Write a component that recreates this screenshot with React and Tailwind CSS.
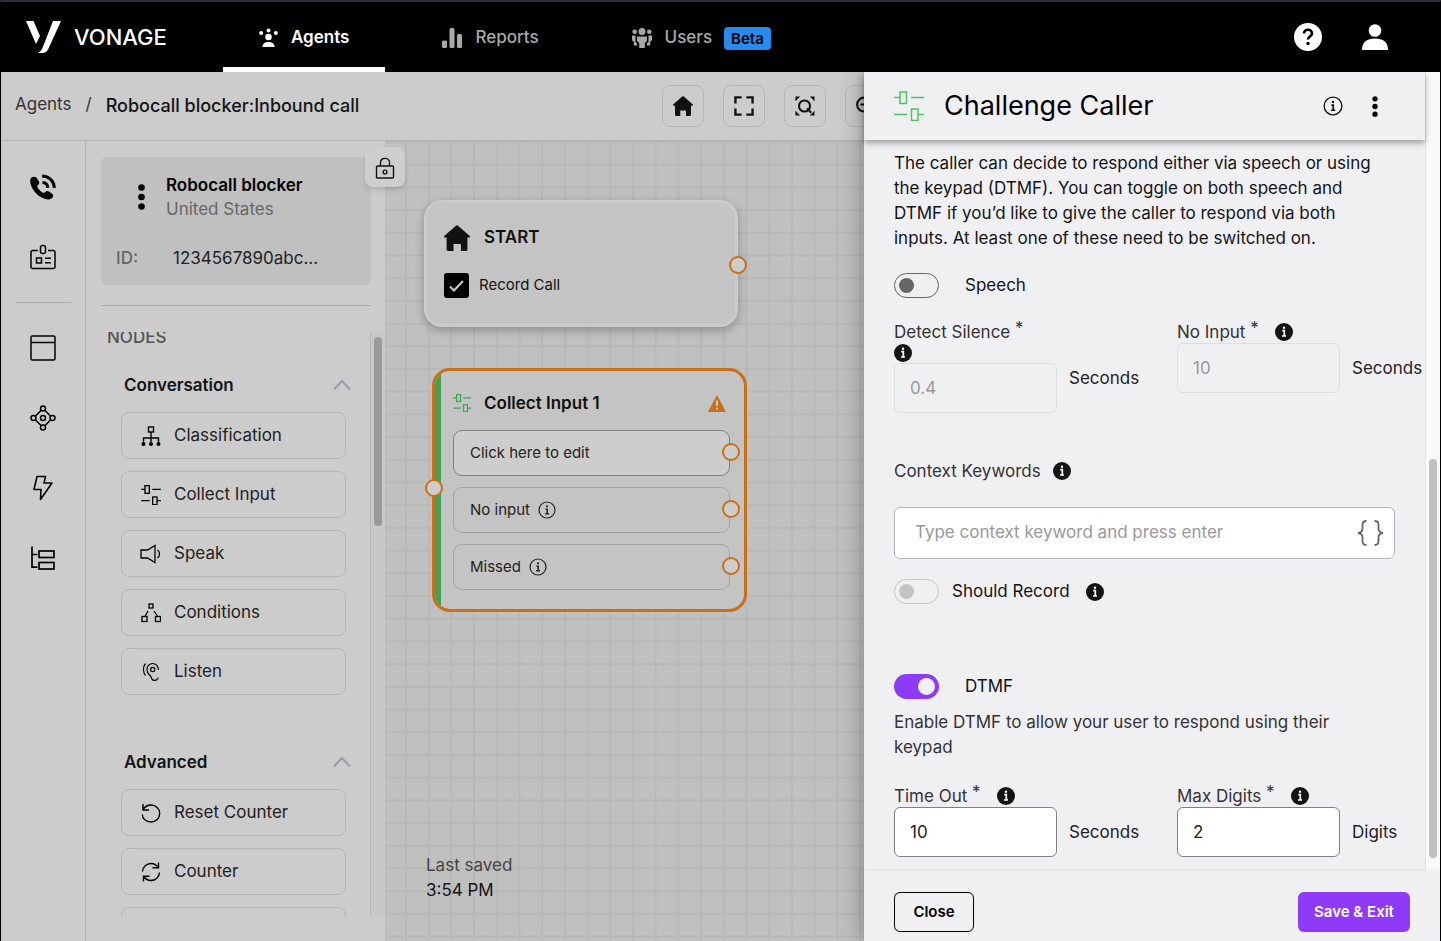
import { useState } from 'react';

function SlidersIcon({ size = 30, stroke = 1.5 }) {
  return (
    <svg width={size} height={size} viewBox="0 0 30 30" fill="none" stroke="currentColor" strokeWidth={stroke} aria-hidden="true">
      <path d="M0 6.5H6M17 6.5H30M0 23.5H13M24 23.5H30" />
      <rect x="6" y="1" width="6.5" height="11.5" />
      <rect x="17.5" y="18" width="6.5" height="11.5" />
    </svg>
  );
}

function HomeIcon({ size }) {
  return (
    <svg width={size} height={size} viewBox="0 0 20 20" fill="currentColor" aria-hidden="true">
      <path d="M9.2 .5a1.2 1.2 0 0 1 1.6 0L19.6 8.2c.7.6.4 1.5-.4 1.5H18V18.8c0 .7-.4 1.2-1.1 1.2H13V14.6H7.3V20H3.2C2.5 20 2 19.5 2 18.8V9.7H.8c-.8 0-1.1-.9-.4-1.5Z" />
    </svg>
  );
}

function InfoSolid() {
  return (
    <svg width="18" height="18" viewBox="0 0 18 18" className="shrink-0" aria-label="More information">
      <circle cx="9" cy="9" r="9" fill="#131415" />
      <circle cx="9" cy="4.7" r="1.2" fill="#fff" />
      <path d="M7.2 7.7H9.3V13M7 13H11" stroke="#fff" strokeWidth="1.7" fill="none" />
    </svg>
  );
}

function InfoOutline({ size = 18 }) {
  return (
    <svg width={size} height={size} viewBox="0 0 18 18" className="shrink-0" aria-hidden="true">
      <circle cx="9" cy="9" r="8" fill="none" stroke="currentColor" strokeWidth="1.2" />
      <circle cx="9" cy="5.3" r="1.1" fill="currentColor" />
      <path d="M7.5 8.2H9.2V12.8M7.2 12.8H11" stroke="currentColor" strokeWidth="1.5" fill="none" />
    </svg>
  );
}

function DotsIcon({ width, height }) {
  return (
    <svg width={width} height={height} viewBox="0 0 7 26" fill="currentColor" aria-hidden="true">
      <circle cx="3.5" cy="3.5" r="3.3" />
      <circle cx="3.5" cy="13" r="3.3" />
      <circle cx="3.5" cy="22.5" r="3.3" />
    </svg>
  );
}

function ChevronUp() {
  return (
    <svg width="18" height="12" viewBox="0 0 18 12" fill="none" stroke="#9a9aa2" strokeWidth="2" aria-hidden="true">
      <path d="M1 10.5 9 2l8 8.5" />
    </svg>
  );
}

const navTabs = [
  {
    label: 'Agents',
    active: true,
    icon: (
      <svg width="19" height="20" viewBox="0 0 19 20" fill="currentColor" aria-hidden="true">
        <circle cx="2.2" cy="5" r="2" />
        <circle cx="9.5" cy="2.5" r="2" />
        <circle cx="16.8" cy="5" r="2" />
        <circle cx="9.5" cy="9" r="3.3" />
        <path d="M3.5 19c0-3.5 2.3-5 6-5s6 1.5 6 5Z" />
      </svg>
    ),
  },
  {
    label: 'Reports',
    icon: (
      <svg width="20" height="20" viewBox="0 0 20 20" fill="currentColor" aria-hidden="true">
        <rect x="0" y="12.5" width="5" height="7.5" rx="1.5" />
        <rect x="7.5" y="0" width="5" height="20" rx="1.5" />
        <rect x="15" y="6" width="5" height="14" rx="1.5" />
      </svg>
    ),
  },
  {
    label: 'Users',
    badge: 'Beta',
    icon: (
      <svg width="20" height="20" viewBox="0 0 20 20" fill="currentColor" aria-hidden="true">
        <circle cx="10" cy="3.5" r="3.5" />
        <circle cx="2.7" cy="3.8" r="2.3" />
        <circle cx="17.3" cy="3.8" r="2.3" />
        <path d="M5 8.5h10v4.5l-2.200 2V20H7.200v-5L5 13Z" />
        <path d="M0 7.500h3.500v6.500l1.500 1.200V17.500H1.800V13.500L0 12.500ZM20 7.500h-3.500v6.500l-1.500 1.200v2.300h3.200V13.500l1.800-1Z" />
      </svg>
    ),
  },
];

const railTop = [
  {
    label: 'Calls',
    icon: (
      <svg width="26" height="26" viewBox="0 0 26 26" aria-hidden="true">
        <path
          d="M1.500 3.600C3 2.400 5.300 2.300 6.500 3.700L8.800 7.200c.9 1.500.3 3-.9 3.900-.9.800-.8 1.400-.2 2.500 1 1.900 2.800 3.800 4.800 5 1 .6 1.700.5 2.500-.4 1-1.200 2.500-1.500 3.900-.6l3.300 2.200c1.400 1 1.300 2.800.2 3.900-1.700 1.800-4.300 2.200-7.200 1.300C8.300 22.800 2.500 17 .7 10.200-.1 7.300 0 5 1.500 3.600Z"
          fill="currentColor"
        />
        <path d="M12 2c7 .2 12 5 12.300 12" fill="none" stroke="currentColor" strokeWidth="3" />
        <path d="M12.500 8.500c3 .1 5 2 5.300 5.300" fill="none" stroke="currentColor" strokeWidth="3" />
      </svg>
    ),
  },
  {
    label: 'Identity',
    icon: (
      <svg width="26" height="26" viewBox="0 0 26 26" fill="none" stroke="currentColor" strokeWidth="1.5" aria-hidden="true">
        <path d="M8 6.500H2.500a1.500 1.500 0 0 0-1.500 1.500V23a1.500 1.500 0 0 0 1.500 1.500h21A1.500 1.500 0 0 0 25 23V8a1.500 1.500 0 0 0-1.500-1.500H18" />
        <rect x="10.5" y="1.5" width="5" height="8" rx="2" />
        <rect x="6.5" y="14" width="5" height="5" />
        <path d="M15 14.300h6M15 18.700h6" />
      </svg>
    ),
  },
];

const railBottom = [
  {
    label: 'Window',
    icon: (
      <svg width="26" height="26" viewBox="0 0 26 26" fill="none" stroke="currentColor" strokeWidth="1.5" aria-hidden="true">
        <rect x="1" y="1" width="24" height="24" rx="1.5" />
        <path d="M1 7.500h24" />
      </svg>
    ),
  },
  {
    label: 'Flow',
    icon: (
      <svg width="26" height="26" viewBox="0 0 26 26" fill="none" stroke="currentColor" strokeWidth="1.5" aria-hidden="true">
        <circle cx="13" cy="3.5" r="2.5" />
        <circle cx="13" cy="22.5" r="2.5" />
        <circle cx="3.5" cy="13" r="2.5" />
        <circle cx="22.5" cy="13" r="2.5" />
        <circle cx="13" cy="13" r="2.5" />
        <path d="M11.200 5.300 5.300 11.200M14.800 5.300l5.900 5.900M5.300 14.800l5.900 5.900M20.700 14.800l-5.900 5.900" />
      </svg>
    ),
  },
  {
    label: 'Events',
    icon: (
      <svg width="26" height="26" viewBox="0 0 26 26" fill="none" stroke="currentColor" strokeWidth="1.6" strokeLinejoin="round" aria-hidden="true">
        <path d="M7 1.500h8.500L14 8h8L10.500 24.500 11 14.500H4Z" />
      </svg>
    ),
  },
  {
    label: 'Tree',
    icon: (
      <svg width="26" height="26" viewBox="0 0 26 26" fill="none" stroke="currentColor" strokeWidth="1.7" aria-hidden="true">
        <path d="M2 1.500v20.700h5.500M2 9.500h5.500" />
        <rect x="9" y="6" width="15" height="6.5" />
        <rect x="9" y="17.5" width="15" height="6.5" />
      </svg>
    ),
  },
];

const nodeGroups = [
  {
    title: 'Conversation',
    items: [
      {
        label: 'Classification',
        icon: (
          <svg width="20" height="20" viewBox="0 0 20 20" fill="none" stroke="currentColor" strokeWidth="1.4" aria-hidden="true">
            <rect x="7.5" y="1" width="5" height="5" />
            <path d="M10 6v10M2.500 16.500V12h15v4.500" />
            <circle cx="2.5" cy="18" r="1.3" fill="currentColor" />
            <circle cx="10" cy="18" r="1.3" fill="currentColor" />
            <circle cx="17.5" cy="18" r="1.3" fill="currentColor" />
          </svg>
        ),
      },
      { label: 'Collect Input', icon: <SlidersIcon size={20} stroke={2} /> },
      {
        label: 'Speak',
        icon: (
          <svg width="22" height="20" viewBox="0 0 22 20" fill="none" stroke="currentColor" strokeWidth="1.3" aria-hidden="true">
            <path d="M1 6h6.500L15 1.500v17L7.500 14H1ZM17.500 6c2.700 2 2.700 6 0 8" />
          </svg>
        ),
      },
      {
        label: 'Conditions',
        icon: (
          <svg width="20" height="20" viewBox="0 0 20 20" fill="none" stroke="currentColor" strokeWidth="1.3" aria-hidden="true">
            <rect x="8" y="1" width="4" height="4" />
            <rect x="1" y="13.5" width="5" height="5" />
            <rect x="14.5" y="13.5" width="5" height="5" />
            <path d="M7 8 4.200 13M13 8l3.500 5" />
          </svg>
        ),
      },
      {
        label: 'Listen',
        icon: (
          <svg width="20" height="20" viewBox="0 0 20 20" fill="none" stroke="currentColor" strokeWidth="1.2" aria-hidden="true">
            <path d="M17.500 8c0-3.800-2.500-6.500-5.800-6.500S6 4 6 7.500c0 5.500 3.500 4.500 4.500 8.500 1 3.500 6 3.200 6.500-.5" />
            <circle cx="11.7" cy="7.5" r="2.2" />
            <path d="M4.500 1.500c-2.700 3.200-2.700 8.800 0 12" />
          </svg>
        ),
      },
    ],
  },
  {
    title: 'Advanced',
    items: [
      {
        label: 'Reset Counter',
        icon: (
          <svg width="20" height="20" viewBox="0 0 20 20" fill="none" stroke="currentColor" strokeWidth="1.4" aria-hidden="true">
            <path d="M2 1v6h6M2 7c1.500-3 4.500-5 8-5 5 0 8.700 3.800 8.700 8.500S15 19 10 19s-8.700-3.500-8.700-7.500" />
          </svg>
        ),
      },
      {
        label: 'Counter',
        icon: (
          <svg width="20" height="20" viewBox="0 0 20 20" fill="none" stroke="currentColor" strokeWidth="1.4" aria-hidden="true">
            <path d="M1.500 9.500c.3-4.500 4-8 8.500-8 3 0 5.500 1.500 7.200 4M17.500 .5v5.300h-6M18.500 10.500c-.3 4.500-4 8-8.500 8-3 0-5.500-1.500-7.200-4M2.500 19.500v-5.300h6" />
          </svg>
        ),
      },
      { label: 'more', icon: null },
    ],
  },
];

const canvasTools = [
  { label: 'Home', icon: <HomeIcon size={20} /> },
  {
    label: 'Fit to screen',
    icon: (
      <svg width="20" height="20" viewBox="0 0 21 21" fill="none" stroke="currentColor" strokeWidth="2.5" aria-hidden="true">
        <path d="M8 1.500H1.500V8M13 1.500h6.500V8M8 19.500H1.500V13M13 19.500h6.500V13" />
      </svg>
    ),
  },
  {
    label: 'Search canvas',
    icon: (
      <svg width="20" height="20" viewBox="0 0 21 21" fill="currentColor" aria-hidden="true">
        <path d="M.5.5H5.500L.5 5.500ZM20.500.5v5l-5-5ZM.5 20.500v-5l5 5ZM20.500 20.500h-5l5-5Z" />
        <circle cx="10" cy="10.5" r="5.8" fill="none" stroke="currentColor" strokeWidth="2.2" />
        <path d="m12.500 13 4.500 4.500" stroke="currentColor" strokeWidth="2.2" />
      </svg>
    ),
  },
  {
    label: 'Zoom out',
    icon: (
      <svg width="20" height="20" viewBox="0 0 21 21" fill="none" stroke="currentColor" strokeWidth="2.2" aria-hidden="true">
        <circle cx="8.5" cy="9" r="7.3" />
        <path d="M4.500 9h8M14 14.500l6 6" />
      </svg>
    ),
  },
];

function TopBar() {
  return (
    <header className="relative z-20 flex h-[70px] shrink-0 items-stretch bg-black text-white">
      <a href="#home" className="flex w-[222px] items-center gap-3 pl-[25px]" aria-label="Vonage home">
        <svg width="36" height="32" viewBox="0 0 36 32" fill="#fff" aria-hidden="true">
          <path d="M0 0h7.500L14 15 10 23ZM27 0h8L22.500 27.500C21 30.500 19.500 32 16 32h-4.500c2.500-1 3.700-2.200 5-5Z" />
        </svg>
        <span className="text-[22px] font-medium">VONAGE</span>
      </a>
      <nav className="flex gap-[21px]">
        {navTabs.map((tab) => (
          <a
            key={tab.label}
            href={`#${tab.label.toLowerCase()}`}
            className={
              tab.active
                ? 'flex items-center border-b-[5px] border-white px-9 pt-[7px] text-[17px] font-semibold text-white'
                : 'flex items-center border-b-[5px] border-transparent px-9 pt-[7px] text-[17px] font-medium text-[#a8a8a8]'
            }
          >
            {tab.icon}
            <span className="ml-[13px]">{tab.label}</span>
            {tab.badge && (
              <span className="ml-3 rounded bg-[#268bea] px-[7px] text-[15px] leading-[23px] font-semibold text-black">{tab.badge}</span>
            )}
          </a>
        ))}
      </nav>
      <div className="ml-auto flex items-center gap-10 pr-[52px]">
        <button type="button" aria-label="Help">
          <svg width="28" height="28" viewBox="0 0 28 28" aria-hidden="true">
            <circle cx="14" cy="14" r="14" fill="#fff" />
            <path d="M10 10.500C10 5.500 18 5.500 18 10.500c0 2.700-4 2.800-4 6" fill="none" stroke="#000" strokeWidth="2.7" />
            <circle cx="14" cy="20.500" r="1.700" fill="#000" />
          </svg>
        </button>
        <button type="button" aria-label="Account">
          <svg width="26" height="26" viewBox="0 0 26 26" fill="#fff" aria-hidden="true">
            <circle cx="13" cy="6.5" r="6.3" />
            <path d="M0 26c0-8 5-11.500 13-11.500S26 18 26 26Z" />
          </svg>
        </button>
      </div>
    </header>
  );
}

function SubHeader() {
  return (
    <div className="flex h-[69px] shrink-0 items-center border-b border-[#b3b3b3] bg-[#cccccc]">
      <div className="flex min-w-0 flex-1 items-center gap-3.5 pb-0.5 pl-3.5 text-[17px]">
        <a href="#agents" className="text-[#333333]">Agents</a>
        <span className="text-[#333333]">/</span>
        <span className="truncate text-[18px] font-medium text-[#131415]">Robocall blocker:Inbound call</span>
      </div>
      <div className="flex w-[202px] shrink-0 gap-[19px] overflow-hidden">
        {canvasTools.map((tool) => (
          <button
            key={tool.label}
            type="button"
            aria-label={tool.label}
            className="flex size-[42px] shrink-0 items-center justify-center rounded-lg border border-[#b5b5b5] text-[#111111]"
          >
            {tool.icon}
          </button>
        ))}
      </div>
    </div>
  );
}

function Rail() {
  return (
    <aside className="flex w-[85px] shrink-0 flex-col items-center border-r border-[#b3b3b3] bg-[#cccccc] pt-[33px] text-black">
      <div className="flex flex-col gap-11">
        {railTop.map((item) => (
          <button key={item.label} type="button" aria-label={item.label}>{item.icon}</button>
        ))}
      </div>
      <hr className="my-8 w-[55px] border-[#adadad]" />
      <div className="flex flex-col gap-11">
        {railBottom.map((item) => (
          <button key={item.label} type="button" aria-label={item.label}>{item.icon}</button>
        ))}
      </div>
    </aside>
  );
}

function NodePanel() {
  return (
    <aside className="relative z-10 flex w-[300px] shrink-0 flex-col border-r border-[#bbbbbb] bg-[#cccccc] pt-4 pb-6">
      <div className="mr-3.5 ml-[15px] h-32 rounded-md bg-[#c0c0c0] pt-4 text-[17px]">
        <div className="flex items-center">
          <button type="button" aria-label="Agent menu" className="ml-[37px] text-black">
            <DotsIcon width={7} height={26} />
          </button>
          <div className="ml-[21px] leading-6">
            <p className="font-semibold text-black">Robocall blocker</p>
            <p className="text-[#666666]">United States</p>
          </div>
        </div>
        <div className="mt-[25px] flex pl-[15px] leading-6">
          <span className="w-[57px] font-medium text-[#666666]">ID:</span>
          <span className="text-[#222222]">1234567890abc...</span>
        </div>
      </div>
      <hr className="mr-3.5 ml-[15px] mt-5 border-[#adadad]" />
      <button
        type="button"
        aria-label="Lock panel"
        className="absolute top-1.5 -right-5 flex size-10 items-center justify-center rounded-lg bg-[#cecece] pt-0.5 text-[#111111] shadow-md"
      >
        <svg width="20" height="22" viewBox="0 0 20 22" fill="none" stroke="currentColor" strokeWidth="1.4" aria-hidden="true">
          <rect x="1.5" y="9" width="17" height="12" rx="1" />
          <path d="M5.500 9V5.500C5.500 0 14.500 0 14.500 5.500V9" />
          <circle cx="10" cy="15" r="1.9" />
        </svg>
      </button>

      <div className="mt-[26px] flex min-h-0 flex-1">
        <div className="min-w-0 flex-1 overflow-hidden">
          <h2 className="-mt-0.5 pl-[21px] text-[17px] leading-[14px] font-medium text-[#555555]">NODES</h2>
          {nodeGroups.map((group, i) => (
            <section key={group.title} className={i === 0 ? 'mt-[29px] mr-6 ml-[35px]' : 'mt-[55px] mr-6 ml-[35px]'}>
              <button type="button" className="flex w-full items-center justify-between pl-[3px] text-[17px] leading-6 font-semibold text-[#131415]">
                {group.title}
                <span className="-mr-[5px]"><ChevronUp /></span>
              </button>
              <div className="mt-[15px] flex flex-col gap-3">
                {group.items.map((item) => (
                  <button
                    key={item.label}
                    type="button"
                    className="flex h-[47px] shrink-0 items-center gap-3 rounded-lg border border-[#b5b5b5] pl-[18px] text-[17px] text-[#222222]"
                  >
                    {item.icon && (
                      <>
                        <span className="flex w-[22px] justify-center text-black">{item.icon}</span>
                        {item.label}
                      </>
                    )}
                  </button>
                ))}
              </div>
            </section>
          ))}
        </div>
        <div className="w-[15px] shrink-0 border-l border-[#b5b5b5] bg-[#c8c8c8] pt-[5px]">
          <div className="mx-auto h-[189px] w-2 rounded-full bg-[#999999]" />
        </div>
      </div>
    </aside>
  );
}

function Handle({ className }) {
  return <span className={`absolute size-[18px] rounded-full border-2 border-[#c87018] bg-[#cdcdcd] ${className}`} />;
}

function StartNode() {
  const [record, setRecord] = useState(true);

  return (
    <div className="absolute top-[59px] left-[38px] h-[127px] w-[314px] rounded-[18px] border-[3px] border-[#cbcbcb] bg-[#c4c4c4] pt-[22px] pl-[17px] shadow-[0_3px_10px_rgba(0,0,0,0.28)]">
      <div className="flex items-center gap-[14px] text-[17px] font-semibold text-[#111111]">
        <HomeIcon size={26} />
        START
      </div>
      <label className="mt-[22px] flex items-center gap-2.5 text-[15px] text-[#131415]">
        <input type="checkbox" checked={record} onChange={() => setRecord(!record)} className="peer sr-only" />
        <span className="flex size-[25px] items-center justify-center rounded-[3px] bg-black">
          {record && (
            <svg width="15" height="12" viewBox="0 0 15 12" fill="none" stroke="#cccccc" strokeWidth="2" aria-hidden="true">
              <path d="m1 6.500 4 4L14 1" />
            </svg>
          )}
        </span>
        Record Call
      </label>
      <Handle className="top-[53px] -right-[12px]" />
    </div>
  );
}

function CollectInputNode() {
  return (
    <div className="absolute top-[227px] left-[46px] w-[315px]">
      <div className="flex overflow-hidden rounded-[18px] border-[3px] border-[#c87018] bg-[#c4c4c4]">
        <div className="w-1.5 shrink-0 bg-[#42a055]" />
        <div className="flex-1 pt-5 pr-3.5 pb-[19px] pl-3">
          <div className="flex items-center text-[17px] leading-6 font-semibold text-[#111111]">
            <span className="text-[#42a055]"><SlidersIcon size={18} stroke={2} /></span>
            <span className="ml-[13px]">Collect Input 1</span>
            <svg width="18" height="17" viewBox="0 0 18 17" className="mr-1 ml-auto" aria-label="Incomplete">
              <path d="M9 0 18 17H0Z" fill="#c87018" />
              <path d="M9 5.500V11M9 12.500v2" stroke="#cdcdcd" strokeWidth="2" />
            </svg>
          </div>
          <div className="mt-[15px] flex flex-col gap-[11px] text-[15px] text-[#222222]">
            <button type="button" className="relative flex h-[46px] items-center rounded-[9px] border border-[#808080] bg-[#cdcdcd] pl-4">
              Click here to edit
              <Handle className="top-3 -right-[11px]" />
            </button>
            <div className="relative flex h-[46px] items-center gap-2 rounded-[9px] border border-[#a3a3a3] pl-4">
              No input <InfoOutline />
              <Handle className="top-3 -right-[11px]" />
            </div>
            <div className="relative flex h-[46px] items-center gap-2 rounded-[9px] border border-[#a3a3a3] pl-4">
              Missed <InfoOutline />
              <Handle className="top-3 -right-[11px]" />
            </div>
          </div>
        </div>
      </div>
      <Handle className="top-[111px] -left-[7px]" />
    </div>
  );
}

function Canvas() {
  return (
    <main className="relative flex min-w-0 flex-1 flex-col justify-end overflow-hidden bg-[#c0c0c0]">
      <svg className="absolute inset-0 size-full" aria-hidden="true">
        <defs>
          <pattern id="grid" width="22.7" height="22.7" patternUnits="userSpaceOnUse" x="19" y="0">
            <path d="M1 0V22.7M0 1H22.7" stroke="#b8b8b8" strokeWidth="2" />
          </pattern>
        </defs>
        <rect width="100%" height="100%" fill="url(#grid)" />
      </svg>
      <StartNode />
      <CollectInputNode />
      <div className="relative mb-[38px] ml-10 text-[17px] leading-[25px]">
        <p className="text-[#444444]">Last saved</p>
        <p className="text-[#131415]">3:54 PM</p>
      </div>
    </main>
  );
}

function Toggle({ id, checked, disabled, onChange }) {
  let track = 'flex h-[25px] w-[45px] items-center rounded-full border border-[#666666] px-1';
  let knob = 'size-[15px] rounded-full bg-[#666666]';
  if (disabled) {
    track = 'flex h-[25px] w-[45px] items-center rounded-full border border-[#c6c6c6] px-1';
    knob = 'size-[15px] rounded-full bg-[#c3c3c3]';
  } else if (checked) {
    track = 'flex h-[25px] w-[45px] items-center justify-end rounded-full bg-[#8f3af9] px-1';
    knob = 'size-[17px] rounded-full bg-[#f0f0f3]';
  }

  return (
    <label htmlFor={id} className="relative block shrink-0">
      <input id={id} type="checkbox" role="switch" checked={checked} disabled={disabled} onChange={onChange} className="sr-only" />
      <span className={track}>
        <span className={knob} />
      </span>
    </label>
  );
}

function NumberField({ id, label, unit, defaultValue, disabled }) {
  return (
    <div className="flex items-center">
      <div className="w-[163px] shrink-0">
        <div className="flex flex-wrap items-center gap-x-4 text-[#333333]">
          <label htmlFor={id} className="leading-[22px]">
            {label} <span className="relative -top-1">*</span>
          </label>
          <span className="flex h-5 items-center"><InfoSolid /></span>
        </div>
        <input
          id={id}
          type="text"
          defaultValue={defaultValue}
          disabled={disabled}
          className="block h-[50px] w-full rounded-md border border-[#808080] bg-white px-[15px] text-[#222222] disabled:border-[#dedee0] disabled:bg-transparent disabled:text-[#999999]"
        />
      </div>
      <span className="pt-[23px] pl-3 text-[#222222]">{unit}</span>
    </div>
  );
}

function Drawer() {
  const [speech, setSpeech] = useState(false);
  const [dtmf, setDtmf] = useState(true);

  return (
    <section className="relative z-10 flex w-[576px] shrink-0 flex-col bg-[#f0f0f3] text-[17px] shadow-[0_0_24px_rgba(0,0,0,0.35)]">
      <div className="flex min-h-0 flex-1">
        <div className="flex min-w-0 flex-1 flex-col">
          <div className="relative z-10 flex h-[68px] shrink-0 items-center pr-[47px] pl-[30px] shadow-[0_3px_6px_rgba(0,0,0,0.35)]">
            <span className="text-[#4dc266]"><SlidersIcon /></span>
            <h1 className="ml-5 text-[27px] text-black">Challenge Caller</h1>
            <button type="button" aria-label="Node information" className="ml-auto text-[#131415]">
              <InfoOutline size={20} />
            </button>
            <button type="button" aria-label="Node menu" className="ml-[29px] text-black">
              <DotsIcon width={6} height={21} />
            </button>
          </div>

          <div className="min-h-0 flex-1 overflow-hidden px-[30px] pt-[11px]">
            <p className="mr-3 leading-[25px] text-[#131415]">
              The caller can decide to respond either via speech or using the keypad (DTMF). You can toggle on both speech and
              DTMF if you’d like to give the caller to respond via both inputs. At least one of these need to be switched on.
            </p>

            <div className="mt-[22px] flex items-center gap-[26px] text-[#131415]">
              <Toggle id="speech" checked={speech} onChange={() => setSpeech(!speech)} />
              <label htmlFor="speech" className="leading-[25px]">Speech</label>
            </div>

            <div className="mt-[23px] -mr-7 grid grid-cols-[283px_1fr] items-start">
              <NumberField id="detect-silence" label="Detect Silence" unit="Seconds" defaultValue="0.4" disabled />
              <NumberField id="no-input" label="No Input" unit="Seconds" defaultValue="10" disabled />
            </div>

            <div className="mt-[46px] flex items-center gap-3 text-[#333333]">
              <label htmlFor="keywords" className="leading-6">Context Keywords</label>
              <InfoSolid />
            </div>
            <div className="mt-6 flex h-[52px] items-center rounded-md border border-[#b5b5c0] bg-white pr-2.5 pl-5">
              <input
                id="keywords"
                type="text"
                placeholder="Type context keyword and press enter"
                className="min-w-0 flex-1 bg-transparent outline-none placeholder:text-[#999999]"
              />
              <button type="button" aria-label="Insert variable" className="text-[#666666]">
                <svg width="27" height="26" viewBox="0 0 27 26" fill="none" stroke="currentColor" strokeWidth="1.8" aria-hidden="true">
                  <path d="M9.500 1C6.500 1 5.500 2 5.500 4.500V9c0 2.500-1.500 3.500-4.500 4 3 .5 4.500 1.500 4.500 4v4.500C5.500 24 6.500 25 9.500 25M17.500 1c3 0 4 1 4 3.500V9c0 2.500 1.500 3.500 4.500 4-3 .5-4.500 1.500-4.500 4v4.500c0 2.500-1 3.500-4 3.500" />
                </svg>
              </button>
            </div>

            <div className="mt-5 flex items-center text-[#131415]">
              <Toggle id="record" checked={false} disabled onChange={() => {}} />
              <label htmlFor="record" className="mr-4 ml-[13px] leading-[25px]">Should Record</label>
              <InfoSolid />
            </div>

            <div className="mt-[70px] flex items-center gap-[26px] text-[#131415]">
              <Toggle id="dtmf" checked={dtmf} onChange={() => setDtmf(!dtmf)} />
              <label htmlFor="dtmf" className="leading-[25px]">DTMF</label>
            </div>
            <p className="mt-[11px] mr-3 leading-[25px] text-[#333333]">Enable DTMF to allow your user to respond using their keypad</p>

            <div className="mt-[25px] -mr-7 grid grid-cols-[283px_1fr] items-start">
              <NumberField id="time-out" label="Time Out" unit="Seconds" defaultValue="10" />
              <NumberField id="max-digits" label="Max Digits" unit="Digits" defaultValue="2" />
            </div>
          </div>
        </div>
        <div className="flex w-[15px] shrink-0 flex-col border-l border-[#e3e3e3] bg-[#fafafa] pb-[13px]">
          <div className="mx-auto mt-auto h-[399px] w-2 rounded-full bg-[#c0c0c0]" />
        </div>
      </div>

      <footer className="flex h-[70px] shrink-0 items-center justify-between pt-3 pr-[30px] pl-[30px] shadow-[0_-1px_3px_rgba(0,0,0,0.06)]">
        <button type="button" className="h-10 w-20 rounded-md border border-black text-[15px] font-semibold text-black">Close</button>
        <button type="button" className="h-10 w-28 rounded-md bg-[#8f3af9] text-[15px] font-semibold text-white">Save &amp; Exit</button>
      </footer>
    </section>
  );
}

export default function App() {
  return (
    <div className="flex h-screen flex-col overflow-hidden border-x border-t-2 border-x-black border-t-[#2d2f40] font-[Inter,'Open_Sans',sans-serif]">
      <TopBar />
      <div className="flex min-h-0 flex-1">
        <div className="flex min-w-0 flex-1 flex-col">
          <SubHeader />
          <div className="flex min-h-0 flex-1">
            <Rail />
            <NodePanel />
            <Canvas />
          </div>
        </div>
        <Drawer />
      </div>
    </div>
  );
}
